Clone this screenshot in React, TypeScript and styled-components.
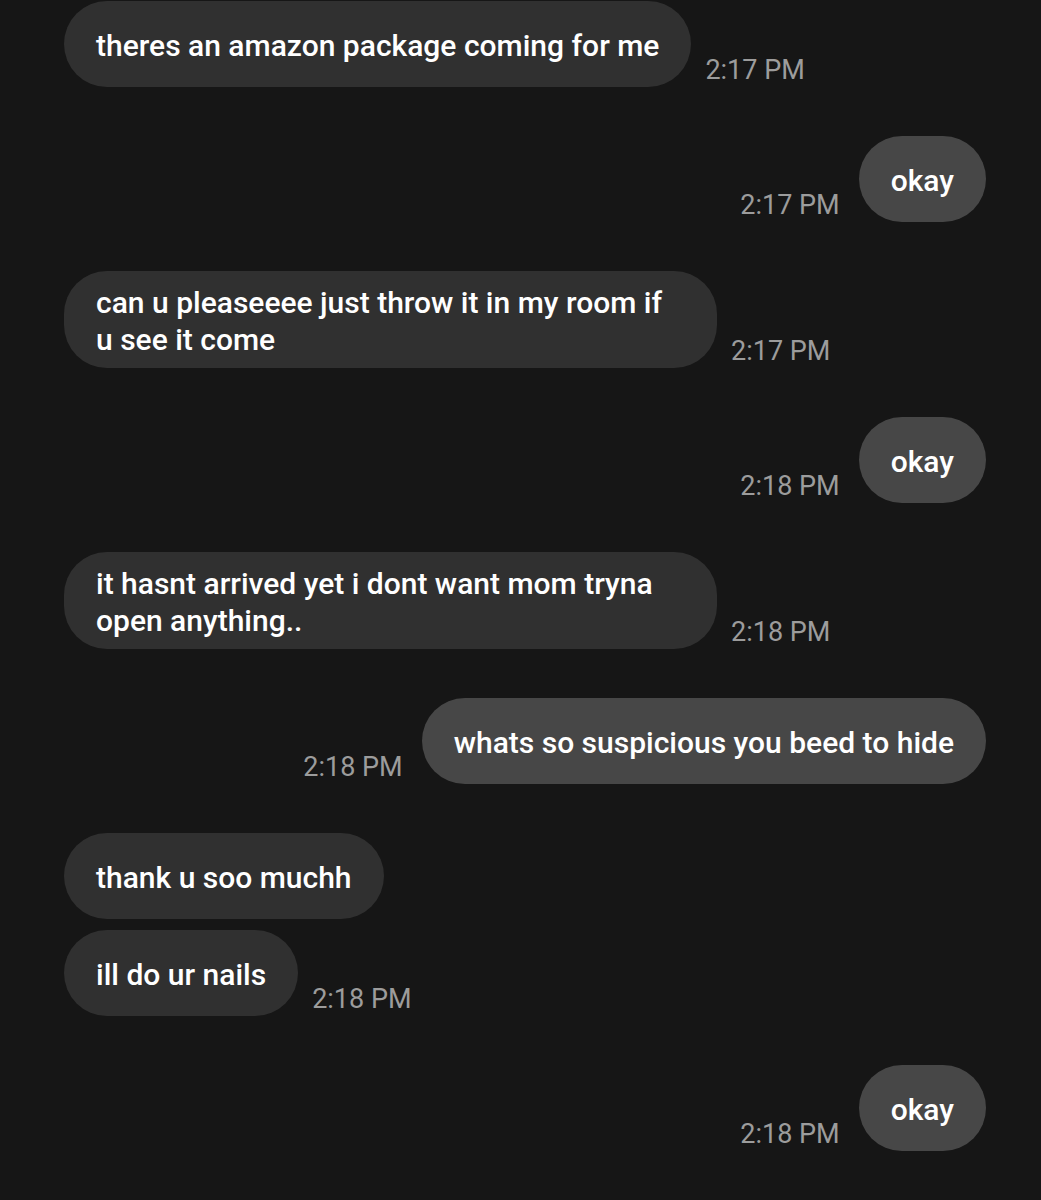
import React from "react";
import styled, { createGlobalStyle } from "styled-components";

const Global = createGlobalStyle`
  html, body { margin: 0; padding: 0; background: #161616; }
  body { font-family: Roboto, "Noto Sans", sans-serif; }
`;

const Page = styled.div`
  width: 1041px;
  min-height: 1200px;
  box-sizing: border-box;
  background: #161616;
  padding: 1px 55px 0 64px;
  display: flex;
  flex-direction: column;
`;

const Row = styled.div<{ $out?: boolean; $gap: number; $tight?: boolean }>`
  display: flex;
  align-items: flex-end;
  justify-content: ${(p) => (p.$out ? "flex-end" : "flex-start")};
  gap: ${(p) => p.$gap}px;
  margin-top: ${(p) => (p.$tight ? 11 : 49)}px;
  &:first-child { margin-top: 0; }
`;

const Bubble = styled.div<{ $out?: boolean }>`
  box-sizing: border-box;
  min-height: 86px;
  max-width: 653px;
  padding: 13px 40px 10px 32px;
  display: flex;
  align-items: center;
  border-radius: 43px;
  background: ${(p) => (p.$out ? "#474747" : "#303030")};
  color: #ffffff;
  font-family: Roboto, sans-serif;
  font-weight: 500;
  font-size: 30px;
  line-height: 37px;
`;

const BubbleText = styled.span`
  margin-right: -8px;
`;

const Time = styled.div`
  flex-shrink: 0;
  color: #9c9c9c;
  font-family: Roboto, sans-serif;
  font-weight: 400;
  font-size: 27px;
  line-height: 30px;
  margin-bottom: 2px;
  white-space: nowrap;
`;

type Msg = { text: string; out?: boolean; time?: string; tight?: boolean };

const msgs: Msg[] = [
  { text: "theres an amazon package coming for me", time: "2:17 PM" },
  { text: "okay", out: true, time: "2:17 PM" },
  { text: "can u pleaseeee just throw it in my room if u see it come", time: "2:17 PM" },
  { text: "okay", out: true, time: "2:18 PM" },
  { text: "it hasnt arrived yet i dont want mom tryna open anything..", time: "2:18 PM" },
  { text: "whats so suspicious you beed to hide", out: true, time: "2:18 PM" },
  { text: "thank u soo muchh" },
  { text: "ill do ur nails", time: "2:18 PM", tight: true },
  { text: "okay", out: true, time: "2:18 PM" },
];

export default function App() {
  return (
    <>
      <Global />
      <Page>
        {msgs.map((m, i) => (
          <Row key={i} $out={m.out} $gap={m.out ? 19 : 14} $tight={m.tight}>
            {m.out && m.time && <Time>{m.time}</Time>}
            <Bubble $out={m.out}>
              <BubbleText>{m.text}</BubbleText>
            </Bubble>
            {!m.out && m.time && <Time>{m.time}</Time>}
          </Row>
        ))}
      </Page>
    </>
  );
}
